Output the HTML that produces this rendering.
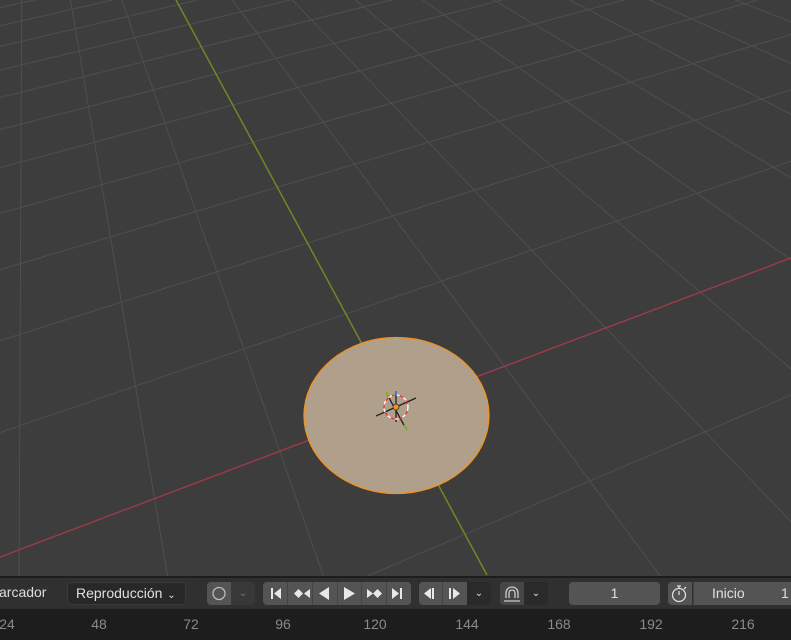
<!DOCTYPE html>
<html style="overflow:hidden"><head><meta charset="utf-8"><style>
html,body{margin:0;width:791px;height:640px;overflow:hidden}
body{background:#3d3d3d;font-family:"Liberation Sans",sans-serif;position:relative}
#vp{position:absolute;left:0;top:0}
.hdr{position:absolute;left:0;top:576px;width:791px;height:31px;background:#303030;border-top:2px solid #1d1d1d}
.tl{position:absolute;left:0;top:609px;width:791px;height:31px;background:#1d1d1d;overflow:hidden}
.tl span{position:absolute;top:7px;color:#8a8a8a;font-size:14px;transform:translateX(-50%)}
.b{position:absolute;top:582px;height:23px;background:#545454;color:#e0e0e0;font-size:14px;line-height:23px;text-align:center;box-sizing:border-box;overflow:hidden}
.d{background:#2a2a2a}
.t{position:absolute;color:#ddd;font-size:14px}
</style></head><body>
<svg id="vp" width="791" height="576" viewBox="0 0 791 576">
<rect width="791" height="576" fill="#3d3d3d"/>
<g id="grid" stroke="#4f4f4f" stroke-width="1"></g>
<line x1="0" y1="557" x2="791" y2="258" stroke="#9a3a48" stroke-width="1.5"/>
<line x1="176" y1="0" x2="487" y2="575" stroke="#6b8a22" stroke-width="1.5"/>
<ellipse cx="396.5" cy="415.5" rx="92.5" ry="78" fill="#b09f8b" stroke="#f0921e" stroke-width="1.3"/>
<g stroke-width="1.3">
<line x1="376" y1="416" x2="416" y2="398" stroke="#222"/>
<line x1="388" y1="396" x2="405" y2="427" stroke="#222"/>
<line x1="396" y1="392" x2="396" y2="422" stroke="#222"/>
<circle cx="396" cy="407" r="12" fill="none" stroke="#fff" stroke-dasharray="4 4"/>
<circle cx="396" cy="407" r="12" fill="none" stroke="#e33" stroke-dasharray="4 4" stroke-dashoffset="4"/>
<line x1="396" y1="391" x2="396" y2="396" stroke="#3a7be0" stroke-width="2"/>
<line x1="386" y1="392" x2="389" y2="397" stroke="#7ab020" stroke-width="2"/>
<line x1="404" y1="425" x2="407" y2="430" stroke="#7ab020" stroke-width="2"/>
<circle cx="396" cy="407" r="3" fill="#f0921e" stroke="#333" stroke-width="0.8"/>
</g>
</svg>
<script>
(function(){
var VR=[3567,-791],VG=[23,-282],O=[396,407],a=0.0354,b=0.156,g=document.getElementById('grid'),s='';
function P(u,v){var w=a*u+b*v+1;return [(a*u*VR[0]+b*v*VG[0]+O[0])/w,(a*u*VR[1]+b*v*VG[1]+O[1])/w];}
function L(p,q){s+='<line x1="'+p[0].toFixed(1)+'" y1="'+p[1].toFixed(1)+'" x2="'+q[0].toFixed(1)+'" y2="'+q[1].toFixed(1)+'"/>';}
for(var k=-25;k<=150;k++){
 if(k==0)continue;
 var vmin=(-1-a*k+0.03)/b, vmax=300;
 if(vmin<vmax)L(P(k,vmin),P(k,vmax));
}
for(var k=-6;k<=300;k++){
 if(k==0)continue;
 var umin=(-1-b*k+0.03)/a, umax=500;
 if(umin<umax)L(P(umin,k),P(umax,k));
}
g.innerHTML=s;
})();
</script>
<div class="hdr"></div>
<div class="t" style="left:-1px;top:584px">arcador</div>
<div class="b" style="left:67px;width:119px;background:#282828;border:1px solid #3a3a3a;border-radius:4px;line-height:21px;text-align:left;padding-left:8px">Reproducción <span style="font-size:10px;margin-left:1px">⌄</span></div>
<div class="b" style="left:207px;width:24px;border-radius:4px 0 0 4px"><svg width="24" height="23"><circle cx="12" cy="11.5" r="6" fill="none" stroke="#bbb" stroke-width="1.3"/></svg></div>
<div class="b d" style="left:231px;width:24px;background:#383838;border-radius:0 4px 4px 0;color:#777;font-size:10px">⌄</div>
<div class="b" style="left:263px;width:148px;border-radius:4px">
<svg width="148" height="23" fill="#e8e8e8">
<rect x="8" y="6" width="2" height="11"/><path d="M11 11.5L18 6V17Z"/>
<line x1="24.5" y1="0" x2="24.5" y2="23" stroke="#444"/>
<path d="M31 11.5L35.5 7 40 11.5 35.5 16Z"/><path d="M41 11.5L47 7V16Z"/>
<line x1="49.5" y1="0" x2="49.5" y2="23" stroke="#444"/>
<path d="M56 11.5L66 5V18Z"/>
<line x1="74.5" y1="0" x2="74.5" y2="23" stroke="#444"/>
<path d="M81 5L92 11.5 81 18Z"/>
<line x1="98.5" y1="0" x2="98.5" y2="23" stroke="#444"/>
<path d="M104 7L110 11.5 104 16Z"/><path d="M110 11.5L114.5 7 119 11.5 114.5 16Z"/>
<line x1="123.5" y1="0" x2="123.5" y2="23" stroke="#444"/>
<path d="M129 6L136 11.5 129 17Z"/><rect x="137" y="6" width="2" height="11"/>
</svg></div>
<div class="b" style="left:419px;width:48px;border-radius:4px 0 0 4px">
<svg width="48" height="23" fill="#e8e8e8"><path d="M5 11.5L12 6V17Z"/><rect x="13" y="6" width="2" height="11"/><line x1="23.5" y1="0" x2="23.5" y2="23" stroke="#444"/><rect x="30" y="6" width="2" height="11"/><path d="M34 6L41 11.5 34 17Z"/></svg></div>
<div class="b d" style="left:467px;width:24px;border-radius:0 4px 4px 0;font-size:10px">⌄</div>
<div class="b" style="left:500px;width:24px;background:#474747;border-radius:4px 0 0 4px"><svg width="24" height="23" fill="none" stroke="#ccc" stroke-width="1.3"><path d="M6 16V11a6 6 0 0 1 12 0v5M9 16V11a3 3 0 0 1 6 0v5"/><line x1="4" y1="19" x2="20" y2="19"/></svg></div>
<div class="b d" style="left:524px;width:24px;border-radius:0 4px 4px 0;font-size:10px">⌄</div>
<div class="b" style="left:569px;width:91px;border-radius:4px">1</div>
<div class="b" style="left:668px;width:24px;border-radius:4px 0 0 4px"><svg width="24" height="23" fill="none" stroke="#ddd" stroke-width="1.3"><circle cx="11" cy="13" r="6.5"/><path d="M11 13V9M9 4h4M11 4v2.5M16 7l2-2"/></svg></div>
<div class="b" style="left:693px;width:98px;border-left:1px solid #444"><span style="position:absolute;left:18px">Inicio</span><span style="position:absolute;left:87px">1</span></div>
<div class="tl">
<span style="left:7px">24</span><span style="left:99px">48</span><span style="left:191px">72</span><span style="left:283px">96</span><span style="left:375px">120</span><span style="left:467px">144</span><span style="left:559px">168</span><span style="left:651px">192</span><span style="left:743px">216</span>
</div>
</body></html>
